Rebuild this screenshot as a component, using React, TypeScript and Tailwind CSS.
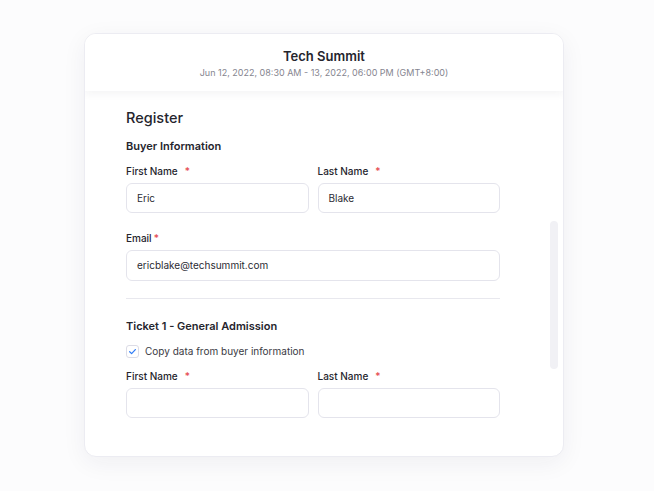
import React from 'react'

function Label({ text, wide }: { text: string; wide?: boolean }) {
  return (
    <div className="flex h-4 items-center text-[10px] font-medium text-[#25252d]">
      <span>{text}</span>
      <span className={`${wide ? 'ml-[7px]' : 'ml-[2px]'} text-[#e5484d]`}>*</span>
    </div>
  )
}

function Field({ value, tall }: { value?: string; tall?: boolean }) {
  return (
    <div
      className={`mt-1 flex ${tall ? 'h-[31px]' : 'h-[30px]'} items-center rounded-md border border-[#e4e4ec] bg-white px-[10px] text-[10px] text-[#2a2a33]`}
    >
      {value}
    </div>
  )
}

export default function App() {
  return (
    <div
      className="h-[491px] w-full bg-[#fcfcfd] pl-[84px] pt-[33px]"
      style={{ fontFamily: 'Inter, "Noto Sans", sans-serif' }}
    >
      <div className="flex h-[424px] w-[480px] flex-col overflow-hidden rounded-xl border border-[#ececf2] bg-white shadow-[0_6px_24px_rgba(30,30,60,0.06)]">
        {/* Header */}
        <div className="relative z-10 flex h-[57px] shrink-0 flex-col items-center bg-white pt-[13px] shadow-[0_3px_8px_rgba(30,30,60,0.05)]">
          <div className="text-[13px] font-semibold leading-[18px] text-[#25252d]">Tech Summit</div>
          <div className="text-[9px] leading-[16px] text-[#85858f]">
            Jun 12, 2022, 08:30 AM - 13, 2022, 06:00 PM (GMT+8:00)
          </div>
        </div>

        {/* Body */}
        <div className="relative flex-1 overflow-hidden">
          <div className="w-[458px] pl-[41px] pt-[17px]">
            <div className="w-[374px]">
              <div className="text-[14.5px] font-medium leading-[20px] text-[#25252d]">Register</div>
              <div className="mt-[10px] text-[11px] font-semibold leading-4 text-[#25252d]">Buyer Information</div>

              <div className="mt-[9px] grid grid-cols-2 gap-x-[9px]">
                <div>
                  <Label text="First Name" wide />
                  <Field value="Eric" />
                </div>
                <div>
                  <Label text="Last Name" wide />
                  <Field value="Blake" />
                </div>
              </div>

              <div className="mt-[17px]">
                <Label text="Email" />
                <Field value="ericblake@techsummit.com" tall />
              </div>

              <div className="mt-[17px] h-px bg-[#e8e8ee]" />

              <div className="mt-[19px] text-[11px] font-semibold leading-4 text-[#25252d]">
                Ticket 1 - General Admission
              </div>

              <div className="mt-[9px] flex h-4 items-center">
                <div className="flex h-[13px] w-[13px] items-center justify-center rounded-[3px] border border-[#dcdce6] bg-white">
                  <svg width="9" height="9" viewBox="0 0 12 12" fill="none">
                    <path d="M2.2 6.3 4.8 8.8 9.8 3.4" stroke="#2f7cf6" strokeWidth="1.6" strokeLinecap="round" strokeLinejoin="round" />
                  </svg>
                </div>
                <span className="ml-[6px] text-[10px] text-[#3a3a44]">Copy data from buyer information</span>
              </div>

              <div className="mt-[9px] grid grid-cols-2 gap-x-[9px]">
                <div>
                  <Label text="First Name" wide />
                  <Field />
                </div>
                <div>
                  <Label text="Last Name" wide />
                  <Field />
                </div>
              </div>
            </div>
          </div>

          {/* Scrollbar thumb */}
          <div className="absolute right-[5px] top-[130px] h-[148px] w-[8px] rounded-full bg-[#f1f1f5]" />
        </div>
      </div>
    </div>
  )
}
